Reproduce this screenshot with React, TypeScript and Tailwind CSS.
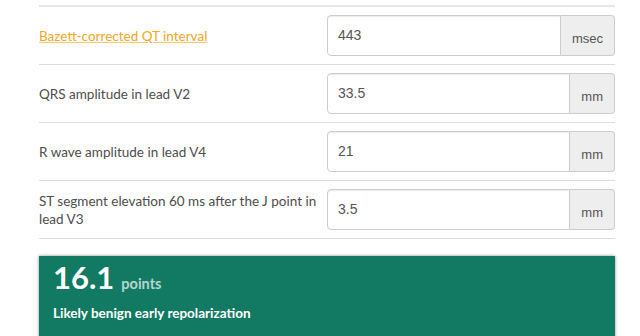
const ROWS = [
  { label: "Bazett-corrected QT interval", value: "443", unit: "msec", link: true },
  { label: "QRS amplitude in lead V2", value: "33.5", unit: "mm" },
  { label: "R wave amplitude in lead V4", value: "21", unit: "mm" },
  { label: "ST segment elevation 60 ms after the J point in lead V3", value: "3.5", unit: "mm" },
];

export default function App() {
  return (
    <main className="h-[336px] overflow-hidden bg-white pl-[39px] pr-[25px] pt-[5px] font-['Lato',sans-serif]">
      <div className="border-t-2 border-[#e6e6e6]">
        {ROWS.map((r) => (
          <div
            key={r.label}
            className="flex items-center border-b border-[#dcdcdc] py-2"
          >
            <div className="w-[288px] pr-[6px] text-[13.5px] leading-[18px] text-[#4d4d4d]">
              {r.link ? (
                <a href="#" className="text-[#f5a623] underline decoration-[#f8c77a]">
                  {r.label}
                </a>
              ) : (
                r.label
              )}
            </div>
            <div className="flex h-[41px] flex-1 font-['Liberation_Sans',Arial,sans-serif] text-[14px] text-[#555]">
              <input
                readOnly
                value={r.value}
                className="min-w-0 flex-1 rounded-l-[4px] border border-[#ccc] px-[10px] shadow-[inset_0_1px_1px_rgba(0,0,0,0.075)] outline-none"
              />
              <span className="flex items-center rounded-r-[4px] border border-l-0 border-[#ccc] bg-[#eee] px-[11px] pt-[6px] text-[13px]">
                {r.unit}
              </span>
            </div>
          </div>
        ))}
      </div>
      <section className="mt-[17px] bg-[#127a63] px-[14px] pt-[3px] pb-6 text-white shadow-[0_0_3px_rgba(0,0,0,0.45)]">
        <div className="flex items-baseline gap-[7px]">
          <span className="text-[31px] font-bold leading-[36px]">16.1</span>
          <span className="text-[14.5px] font-bold text-white/70">points</span>
        </div>
        <p className="mt-[8px] text-[13.5px] font-bold">Likely benign early repolarization</p>
      </section>
    </main>
  );
}
